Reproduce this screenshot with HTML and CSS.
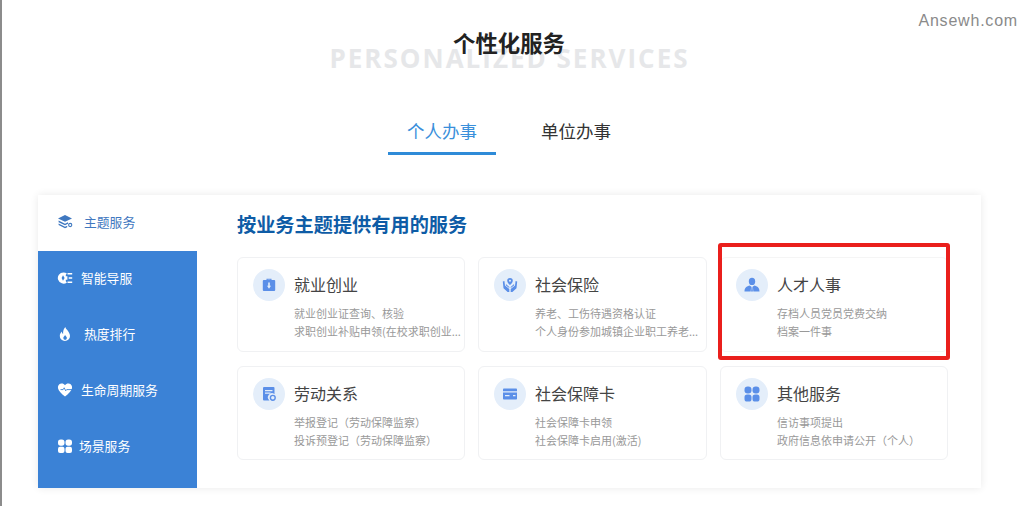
FILE: index.html
```html
<!DOCTYPE html>
<html lang="zh-CN">
<head>
    <meta charset="UTF-8">
    <meta name="viewport" content="width=device-width, initial-scale=1.0">
    <title>个性化服务</title>
    <link rel="stylesheet" href="styles.css">
</head>
<body>
    <div class="marca">Ansewh.com</div>

    <div class="cabecalho">
        <span class="titulo-fundo">PERSONALIZED SERVICES</span>
        <h1 class="titulo">个性化服务</h1>
    </div>

    <div class="abas">
        <div class="aba ativa">个人办事</div>
        <div class="aba">单位办事</div>
    </div>

    <div class="painel">
        <ul class="menu">
            <li class="menu-item ativo">
                <svg class="menu-icone" viewBox="0 0 16 16"><path d="M8 1 15 4.400 8 7.800 1 4.400Z"/><path d="M1.600 6.600 8 9.700l3-1.400v1.500L8 11.300 1.600 8.200Z"/><path d="M1.600 9.600 8 12.700l2.200-1v1.500l-2.200 1-6.400-3.100Z"/><circle cx="13.200" cy="11" r="1.600" fill="none" stroke="currentColor" stroke-width="1.100"/></svg>
                <span class="menu-texto recuo">主题服务</span>
            </li>
            <li class="menu-item">
                <svg class="menu-icone" viewBox="0 0 16 16"><path fill-rule="evenodd" d="M6.500 2.400c1.300 0 2.500.4 3.400 1.200L8.800 4.800v1.400h1.600v3.600H8.800v1.400l1.100 1.200a5.600 5.600 0 1 1-3.400-10ZM6 5.200 4.600 8 6 10.800 7.600 8Z"/><path d="M10.500 3h4.700v1.400h-4.700zM11.700 7.300h3.500v1.400h-3.500zM10.500 11.600h4.700V13h-4.700z"/></svg>
                <span class="menu-texto">智能导服</span>
            </li>
            <li class="menu-item">
                <svg class="menu-icone" viewBox="0 0 16 16"><path d="M8.300 1c.6 2.600 4.700 4.700 4.700 9a5.100 5.100 0 0 1-10.200 0c0-2 .9-3.400 2-4.500.1 1.200.5 2 1.300 2.500C5.900 5.300 6.700 2.700 8.300 1Zm-.2 8c-.5 1-1.800 1.700-1.800 3.100a1.800 1.800 0 0 0 3.600 0c0-1.300-1.300-2-1.800-3.100Z" fill-rule="evenodd"/></svg>
                <span class="menu-texto recuo">热度排行</span>
            </li>
            <li class="menu-item">
                <svg class="menu-icone" viewBox="0 0 16 16"><path fill-rule="evenodd" d="M8 3.200C9 1.800 10.400 1.200 11.800 1.500c2.400.4 3.700 2.500 3.200 4.800-.5 2.600-3.400 5.600-7 8.200C4.400 11.900 1.500 8.900 1 6.300.5 4 1.800 1.900 4.200 1.500 5.600 1.200 7 1.800 8 3.200Z"/><path d="M3.500 7.600h2.600l1.100-1.800 1.500 3 1-1.200h5.800" fill="none" stroke="#3b82d6" stroke-width=".9"/></svg>
                <span class="menu-texto">生命周期服务</span>
            </li>
            <li class="menu-item">
                <svg class="menu-icone" viewBox="0 0 16 16"><rect x="1" y="1.500" width="6.500" height="6.200" rx="2.600"/><rect x="8.500" y="1.500" width="6.500" height="6.200" rx="2.600"/><rect x="1" y="8.700" width="6.500" height="6.300" rx="2"/><rect x="8.500" y="8.700" width="6.500" height="6.300" rx="2"/></svg>
                <span class="menu-texto curto">场景服务</span>
            </li>
        </ul>

        <div class="conteudo">
            <h2 class="subtitulo">按业务主题提供有用的服务</h2>
            <div class="cartoes">
                <div class="cartao">
                    <div class="icone">
                        <svg viewBox="0 0 16 16"><path d="M5.500 3V1.700h5V3h-1V2.700h-3V3Z"/><rect x="1.800" y="3" width="12.400" height="11" rx="1"/><path d="M7.200 5.500h1.600v3.300h1.200L8 11.800 6 8.800h1.200Z" fill="#e4eefa"/></svg>
                    </div>
                    <div class="cartao-texto">
                        <h3>就业创业</h3>
                        <p>就业创业证查询、核验</p>
                        <p>求职创业补贴申领(在校求职创业...</p>
                    </div>
                </div>
                <div class="cartao">
                    <div class="icone">
                        <svg viewBox="0 0 16 16"><path fill-rule="evenodd" d="M8 1a2.800 2.800 0 0 1 2.800 2.800C10.800 5.600 9 7.100 8 8 7 7.100 5.200 5.600 5.200 3.800A2.800 2.800 0 0 1 8 1Zm0 1.800a1 1 0 1 0 0 2 1 1 0 0 0 0-2Z"/><path d="M.8 4.500 2.400 4 3 8.600l4.300 3.300V15H5.600L1.500 11.200ZM15.200 4.500 13.600 4 13 8.600l-4.300 3.300V15h1.700l4.100-3.800Z"/><path d="M3.900 7 7.300 9.900v1L4 8.400ZM12.100 7 8.700 9.900v1L12 8.400Z"/></svg>
                    </div>
                    <div class="cartao-texto">
                        <h3>社会保险</h3>
                        <p>养老、工伤待遇资格认证</p>
                        <p>个人身份参加城镇企业职工养老...</p>
                    </div>
                </div>
                <div class="cartao destaque">
                    <div class="icone">
                        <svg viewBox="0 0 16 16"><ellipse cx="8" cy="4.400" rx="3.200" ry="3.600"/><path d="M5.400 8.600 7.100 9.500 6.700 14.500H.5C.6 11.500 1.700 9.500 5.400 8.600ZM10.600 8.600 8.900 9.500 9.300 14.500h6.200C15.400 11.500 14.300 9.500 10.600 8.600Z"/><path d="M7.500 9.800h1l.4 4.700H7.100Z"/></svg>
                    </div>
                    <div class="cartao-texto">
                        <h3>人才人事</h3>
                        <p>存档人员党员党费交纳</p>
                        <p>档案一件事</p>
                    </div>
                </div>
                <div class="cartao">
                    <div class="icone">
                        <svg viewBox="0 0 16 16"><path d="M3 1h9.500a1 1 0 0 1 1 1v6.200a4 4 0 0 0-5 6.300H3a1 1 0 0 1-1-1V2a1 1 0 0 1 1-1Z"/><path d="M4 4h7.500v1.200H4zM4 6.600h5.500v1.200H4z" fill="#e4eefa"/><circle cx="11.800" cy="11.800" r="2.400" fill="none" stroke="currentColor" stroke-width="1.400"/></svg>
                    </div>
                    <div class="cartao-texto">
                        <h3>劳动关系</h3>
                        <p>举报登记（劳动保障监察）</p>
                        <p>投诉预登记（劳动保障监察）</p>
                    </div>
                </div>
                <div class="cartao">
                    <div class="icone">
                        <svg viewBox="0 0 16 16"><rect x="1" y="2.500" width="14" height="11" rx=".8"/><path d="M1 5.200h14v1.300H1zM3 9h4.500v1.200H3zM11 9h2.500v1.200H11z" fill="#e4eefa"/></svg>
                    </div>
                    <div class="cartao-texto">
                        <h3>社会保障卡</h3>
                        <p>社会保障卡申领</p>
                        <p>社会保障卡启用(激活)</p>
                    </div>
                </div>
                <div class="cartao">
                    <div class="icone">
                        <svg viewBox="0 0 16 16"><rect x=".5" y=".5" width="7" height="7" rx="3.200"/><rect x="8.500" y=".5" width="7" height="7" rx="3.200"/><rect x=".5" y="8.500" width="7" height="7" rx="2.600"/><rect x="8.500" y="8.500" width="7" height="7" rx="2.600"/></svg>
                    </div>
                    <div class="cartao-texto">
                        <h3>其他服务</h3>
                        <p>信访事项提出</p>
                        <p>政府信息依申请公开（个人）</p>
                    </div>
                </div>
            </div>
        </div>
    </div>
</body>
</html>
```

FILE: styles.css
```css
* {
    margin: 0;
    padding: 0;
    box-sizing: border-box;
}

body {
    font-family: "Noto Sans CJK SC", "Open Sans", sans-serif;
    background-color: #fff;
    color: #333;
    height: 506px;
    overflow: hidden;
    border-left: 2px solid #8c8c8c;
    position: relative;
}

.marca {
    position: absolute;
    top: 10px;
    right: 6px;
    font-family: "Liberation Sans", sans-serif;
    font-size: 16px;
    line-height: 22px;
    letter-spacing: 0.8px;
    color: #8a8a8a;
}

.cabecalho {
    position: relative;
    height: 100px;
    text-align: center;
    padding-top: 25px;
    padding-right: 8px;
}

.titulo {
    position: relative;
    font-size: 22.4px;
    line-height: 34px;
    font-weight: 700;
    color: #222;
}

.titulo-fundo {
    position: absolute;
    top: 40px;
    left: 0;
    right: 7px;
    font-family: "Open Sans", sans-serif;
    font-size: 26px;
    line-height: 36px;
    font-weight: 700;
    letter-spacing: 2px;
    color: #e6e7e9;
    white-space: nowrap;
}

.abas {
    display: flex;
    justify-content: center;
    gap: 26px;
    height: 95px;
    margin-left: -8px;
}

.aba {
    width: 108px;
    height: 55px;
    padding-top: 15px;
    text-align: center;
    font-size: 17.5px;
    line-height: 32px;
    color: #333;
}

.aba.ativa {
    color: #3a8fdb;
    border-bottom: 3px solid #2e8bd8;
}

.painel {
    display: flex;
    width: 943px;
    height: 293px;
    margin-left: 36px;
    background-color: #fff;
    box-shadow: 0 0 8px rgba(0, 0, 0, 0.09);
}

.menu {
    width: 159px;
    flex-shrink: 0;
    list-style: none;
    background-color: #3b82d6;
}

.menu-item {
    display: flex;
    align-items: center;
    height: 56px;
    padding-left: 19px;
    padding-bottom: 2px;
    color: #fff;
}

.menu-item.ativo {
    background-color: #fff;
    color: #3f78c0;
}

.menu-icone {
    width: 16px;
    height: 16px;
    fill: currentColor;
    flex-shrink: 0;
}

.menu-texto {
    margin-left: 8px;
    font-size: 12.8px;
    line-height: 18px;
}

.menu-texto.recuo {
    margin-left: 11px;
}

.menu-texto.curto {
    margin-left: 6px;
}

.conteudo {
    flex: 1;
    padding: 16px 0 0 40px;
}

.subtitulo {
    font-size: 19.2px;
    line-height: 27px;
    font-weight: 700;
    color: #0e5ca6;
    margin-bottom: 19px;
}

.cartoes {
    display: grid;
    grid-template-columns: 228px 229px 228px;
    grid-template-rows: 95px 94px;
    gap: 14px 13px;
}

.cartao {
    position: relative;
    display: flex;
    gap: 9px;
    padding: 11px 0 0 15px;
    border: 1px solid #f0f1f3;
    border-radius: 6px;
    background-color: #fff;
}

/* marcacao vermelha por cima do cartao */
.cartao.destaque {
    border-color: #f5f5f5;
}

.cartao.destaque::after {
    content: "";
    position: absolute;
    top: -15px;
    left: -3px;
    right: -3px;
    bottom: -9px;
    border: 4px solid #ea1f1c;
    border-radius: 3px;
}

.icone {
    width: 32px;
    height: 32px;
    flex-shrink: 0;
    display: flex;
    align-items: center;
    justify-content: center;
    border-radius: 50%;
    background-color: #e4eefa;
    color: #5b8fe8;
}

.icone svg {
    width: 16px;
    height: 16px;
    fill: currentColor;
}

.cartao-texto {
    min-width: 0;
}

.cartao-texto h3 {
    font-size: 16px;
    line-height: 30px;
    font-weight: 400;
    color: #444;
    margin-bottom: 5px;
}

.cartao-texto p {
    font-size: 11px;
    line-height: 18px;
    color: #999;
    white-space: nowrap;
}
```
